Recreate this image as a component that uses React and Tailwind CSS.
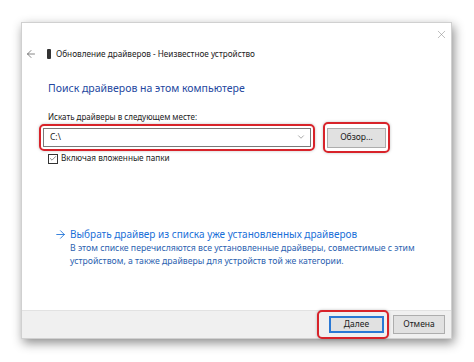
import { ArrowLeft, ArrowRight, X, ChevronDown, Check } from "lucide-react";

export default function App() {
  return (
    <div className="w-[474px] h-[362px] bg-white pt-[22px] pl-[21px] font-['Noto_Sans',sans-serif] text-[#1a1a1a]">
      <div className="relative w-[431px] h-[317px] bg-white flex flex-col shadow-[2px_4px_10px_rgba(0,0,0,0.45)] border border-[#d0d0d0]">
        {/* close */}
        <div className="h-[20px] flex justify-end items-center pr-[3px] pt-[2px]">
          <X size={13} strokeWidth={1} className="text-[#888]" />
        </div>

        {/* title */}
        <div className="flex items-center h-[20px] mt-[1px] pl-[3px]">
          <ArrowLeft size={12} strokeWidth={1.3} className="text-[#444]" />
          <div className="ml-[10px] w-[4px] h-[10px] bg-[#333] rounded-[1px]" />
          <span className="ml-[5px] text-[8.2px] leading-none text-[#222]">
            Обновление драйверов - Неизвестное устройство
          </span>
        </div>

        <div className="pl-[26px] pr-[20px] flex flex-col">
          <h1 className="mt-[19px] text-[10.5px] leading-none text-[#2447a0]">
            Поиск драйверов на этом компьютере
          </h1>

          <div className="mt-[19px] text-[8px] leading-none text-[#222]">
            Искать драйверы в следующем месте:
          </div>

          <div className="mt-[1px] -ml-[9px] flex items-center gap-[8px]">
            <div className="w-[276px] h-[27px] border-2 border-[#d8232a] rounded-[5px] p-[2px] shadow-[0_0_3px_rgba(0,0,0,0.25)]">
              <div className="h-full border border-[#7a7a7a] bg-white flex items-center justify-between pl-[6px] pr-[4px]">
                <span className="text-[8.5px] leading-none">C:\</span>
                <ChevronDown size={10} strokeWidth={1.2} className="text-[#555]" />
              </div>
            </div>
            <div className="w-[67px] h-[31px] border-2 border-[#d8232a] rounded-[5px] px-[2px] pt-[4px] pb-[3px] shadow-[0_0_3px_rgba(0,0,0,0.25)]">
              <div className="h-full border border-[#adadad] bg-[#e1e1e1] flex items-center justify-center text-[8.5px] leading-none">
                Обзор...
              </div>
            </div>
          </div>

          <label className="mt-[1px] flex items-center gap-[3px] text-[8.2px] leading-none">
            <span className="w-[10px] h-[10px] border border-[#333] bg-white flex items-center justify-center">
              <Check size={9} strokeWidth={1.6} className="text-[#222]" />
            </span>
            Включая вложенные папки
          </label>

          <div className="mt-[64px] ml-[6px] flex items-start gap-[3px]">
            <ArrowRight size={13} strokeWidth={1.6} className="text-[#1a6fd8] mt-[0px]" />
            <div className="flex flex-col">
              <div className="text-[10px] leading-[13px] text-[#1a6fd8]">
                Выбрать драйвер из списка уже установленных драйверов
              </div>
              <div className="mt-[1px] text-[8.7px] leading-[13px] text-[#2b5fb0]">
                В этом списке перечисляются все установленные драйверы, совместимые с этим
                <br />
                устройством, а также драйверы для устройств той же категории.
              </div>
            </div>
          </div>
        </div>

        <div className="mt-auto h-[28px] bg-[#f0f0f0] border-t border-[#e2e2e2] flex items-center justify-end pr-[6px] gap-[4px]">
          <div className="w-[72px] h-[29px] border-2 border-[#d8232a] rounded-[5px] p-[4px] pl-[10px] pr-[3px] shadow-[0_0_3px_rgba(0,0,0,0.25)] bg-[#f0f0f0]">
            <div className="h-full border-2 border-[#2a78d4] bg-[#e1e1e1] flex items-center justify-center text-[8.5px] leading-none">
              Далее
            </div>
          </div>
          <div className="w-[52px] h-[19px] border border-[#adadad] bg-[#e1e1e1] flex items-center justify-center text-[8.5px] leading-none">
            Отмена
          </div>
        </div>
      </div>
    </div>
  );
}
